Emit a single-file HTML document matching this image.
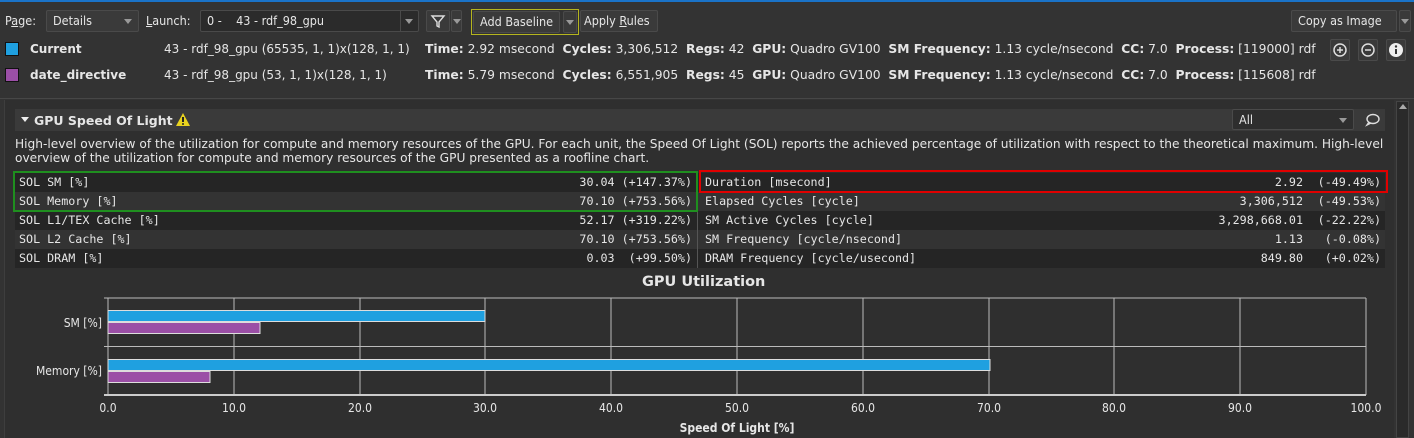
<!DOCTYPE html>
<html><head><meta charset="utf-8"><style>
*{box-sizing:border-box;margin:0;padding:0}
body{width:1414px;height:438px;overflow:hidden;background:#333;font-family:"DejaVu Sans","Liberation Sans",sans-serif;font-size:12px;color:#e6e6e6;position:relative}
.a{position:absolute;white-space:nowrap}
.btn{position:absolute;height:22px;border:1px solid #4a4a4a;background:#3a3a3a;border-radius:2px;line-height:20px;padding:0 6px;font-size:12.5px;font-family:"DejaVu Sans Condensed","DejaVu Sans",sans-serif;white-space:nowrap;overflow:hidden}
.c{font-family:"DejaVu Sans Condensed","DejaVu Sans",sans-serif;font-size:12.5px}
.n{font-family:"DejaVu Sans",sans-serif;font-size:12px}
b{font-weight:bold}
.mono{font-family:"DejaVu Sans Mono","Liberation Mono",monospace;font-size:11.7px}
.row{position:absolute;height:19px;line-height:19px}
.caret{display:inline-block;width:0;height:0;border-left:4px solid transparent;border-right:4px solid transparent;border-top:5px solid #999}
</style></head><body>
<div class="a" style="left:0;top:0;width:1414px;height:2px;background:#1a73c8"></div>
<div class="a c" style="top:13px;left:5px">P<u>a</u>ge:</div>
<div class="btn" style="left:46px;top:10px;width:93px">Details<span class="caret" style="position:absolute;right:6px;top:8px"></span></div>
<div class="a c" style="left:146px;top:13px"><u>L</u>aunch:</div>
<div class="btn" style="left:200px;top:10px;width:219px;background:#2b2b2b">0 -&nbsp;&nbsp;&nbsp;&nbsp;43 - rdf_98_gpu<span style="position:absolute;right:0;top:0;width:18px;height:20px;border-left:1px solid #4a4a4a"></span><span class="caret" style="position:absolute;right:5px;top:8px"></span></div>
<div class="btn" style="left:426px;top:10px;width:24px;padding:0"><svg width="22" height="20" viewBox="0 0 22 20"><path d="M5 5h12l-5 6v5l-2-1v-4z" fill="none" stroke="#ddd" stroke-width="1.4"/></svg></div>
<div class="btn" style="left:451px;top:10px;width:11px;padding:0"><span class="caret" style="position:absolute;left:1px;top:8px"></span></div>
<div class="a" style="left:471px;top:9px;width:108px;height:26px;border:1px solid #b5b51e"></div>
<div class="btn" style="left:473px;top:11px;width:87px;height:22px">Add Baseline</div>
<div class="btn" style="left:563px;top:11px;width:14px;padding:0"><span class="caret" style="position:absolute;left:2px;top:8px"></span></div>
<div class="btn" style="left:580px;top:10px;width:78px;padding:0 3px">Apply <u>R</u>ules</div>
<div class="btn" style="left:1291px;top:10px;width:106px">Copy as Image</div>
<div class="btn" style="left:1399px;top:10px;width:12px;padding:0"><span class="caret" style="position:absolute;left:1px;top:8px"></span></div>

<div class="a" style="left:5px;top:42px;width:14px;height:14px;background:#1fa0e0;border:1px solid #111"></div>
<div class="a" style="left:5px;top:68px;width:14px;height:14px;background:#9b4fa6;border:1px solid #111"></div>
<div class="a n" style="left:30px;top:42px"><b>Current</b></div>
<div class="a n" style="left:30px;top:68px"><b>date_directive</b></div>
<div class="a n" style="left:164px;top:42px">43 - rdf_98_gpu (65535, 1, 1)x(128, 1, 1)</div>
<div class="a n" style="left:164px;top:68px">43 - rdf_98_gpu (53, 1, 1)x(128, 1, 1)</div>
<div class="a n" style="left:425px;top:42px;font-size:12.3px"><b>Time:</b> 2.92 msecond&nbsp;&nbsp;<b>Cycles:</b> 3,306,512&nbsp;&nbsp;<b>Regs:</b> 42&nbsp;&nbsp;<b>GPU:</b> Quadro GV100&nbsp;&nbsp;<b>SM Frequency:</b> 1.13 cycle/nsecond&nbsp;&nbsp;<b>CC:</b> 7.0&nbsp;&nbsp;<b>Process:</b> [119000] rdf</div>
<div class="a n" style="left:425px;top:68px;font-size:12.3px"><b>Time:</b> 5.79 msecond&nbsp;&nbsp;<b>Cycles:</b> 6,551,905&nbsp;&nbsp;<b>Regs:</b> 45&nbsp;&nbsp;<b>GPU:</b> Quadro GV100&nbsp;&nbsp;<b>SM Frequency:</b> 1.13 cycle/nsecond&nbsp;&nbsp;<b>CC:</b> 7.0&nbsp;&nbsp;<b>Process:</b> [115608] rdf</div>
<div class="btn" style="left:1330px;top:39px;width:20px;padding:0;text-align:center"><svg width="18" height="20"><circle cx="9" cy="10" r="6" fill="none" stroke="#ddd" stroke-width="1.5"/><path d="M6 10h6M9 7v6" stroke="#ddd" stroke-width="1.5"/></svg></div>
<div class="btn" style="left:1358px;top:39px;width:20px;padding:0"><svg width="18" height="20"><circle cx="9" cy="10" r="6" fill="none" stroke="#ddd" stroke-width="1.5"/><path d="M6 10h6" stroke="#ddd" stroke-width="1.5"/></svg></div>
<div class="btn" style="left:1386px;top:39px;width:20px;padding:0"><svg width="18" height="20"><circle cx="9" cy="10" r="7" fill="#eee"/><path d="M9 9v5" stroke="#333" stroke-width="2"/><circle cx="9" cy="6.5" r="1.2" fill="#333"/></svg></div>

<div class="a" style="left:0;top:98px;width:1414px;height:1px;background:#474747"></div>
<div class="a" style="left:4px;top:100px;width:1390px;height:338px;background:#2f2f2f;border-left:1px solid #3e3e3e"></div>
<div class="a" style="left:1396px;top:101px;width:13px;height:337px;background:#2a2a2a;border:1px solid #444"></div>
<div class="a" style="left:1399px;top:104px;width:0;height:0;border-left:4px solid transparent;border-right:4px solid transparent;border-bottom:5px solid #aaa"></div>

<div class="a" style="left:15px;top:109px;width:1370px;height:22px;background:#3a3a3a"></div>
<div class="a" style="left:21px;top:117px;border-left:4px solid transparent;border-right:4px solid transparent;border-top:5px solid #eee"></div>
<div class="a" style="left:34px;top:113px;font-weight:bold;font-size:12.5px">GPU Speed Of Light</div>
<svg class="a" style="left:175px;top:112px" width="16" height="15"><path d="M8 1L15 14H1z" fill="#e8d21e"/><path d="M8 5v5" stroke="#222" stroke-width="2"/><circle cx="8" cy="12" r="1" fill="#222"/></svg>
<div class="btn" style="left:1232px;top:109px;width:122px;background:#2e2e2e;height:21px;line-height:19px">All<span class="caret" style="position:absolute;right:6px;top:8px"></span></div>
<svg class="a" style="left:1365px;top:112px" width="16" height="15"><ellipse cx="8" cy="7" rx="6" ry="4.5" fill="none" stroke="#ddd" stroke-width="1.4"/><path d="M4 10l-2 3 4-2" fill="none" stroke="#ddd" stroke-width="1.4"/></svg>

<div class="a" style="left:15px;top:137px;line-height:14px;font-size:12.2px">High-level overview of the utilization for compute and memory resources of the GPU. For each unit, the Speed Of Light (SOL) reports the achieved percentage of utilization with respect to the theoretical maximum. High-level<br>overview of the utilization for compute and memory resources of the GPU presented as a roofline chart.</div>

<div class="a mono" style="left:15px;top:173px;width:1370px;height:95px">
<div class="row" style="left:0;top:0;width:1370px;background:#252525"></div>
<div class="row" style="left:0;top:38px;width:1370px;background:#252525"></div>
<div class="row" style="left:0;top:76px;width:1370px;background:#252525"></div>
<div class="row" style="left:0;top:19px;width:1370px;background:#333"></div>
<div class="row" style="left:0;top:57px;width:1370px;background:#333"></div>
<div class="a" style="left:682px;top:0;width:1px;height:95px;background:#555"></div>
<div class="row" style="left:4px;top:0">SOL SM [%]</div>
<div class="row" style="left:4px;top:19px">SOL Memory [%]</div>
<div class="row" style="left:4px;top:38px">SOL L1/TEX Cache [%]</div>
<div class="row" style="left:4px;top:57px">SOL L2 Cache [%]</div>
<div class="row" style="left:4px;top:76px">SOL DRAM [%]</div>
<div class="row" style="right:693px;top:0">30.04 (+147.37%)</div>
<div class="row" style="right:693px;top:19px">70.10 (+753.56%)</div>
<div class="row" style="right:693px;top:38px">52.17 (+319.22%)</div>
<div class="row" style="right:693px;top:57px">70.10 (+753.56%)</div>
<div class="row" style="right:693px;top:76px">0.03&nbsp; (+99.50%)</div>
<div class="row" style="left:690px;top:0">Duration [msecond]</div>
<div class="row" style="left:690px;top:19px">Elapsed Cycles [cycle]</div>
<div class="row" style="left:690px;top:38px">SM Active Cycles [cycle]</div>
<div class="row" style="left:690px;top:57px">SM Frequency [cycle/nsecond]</div>
<div class="row" style="left:690px;top:76px">DRAM Frequency [cycle/usecond]</div>
<div class="row" style="right:82px;top:0">2.92</div>
<div class="row" style="right:82px;top:19px">3,306,512</div>
<div class="row" style="right:82px;top:38px">3,298,668.01</div>
<div class="row" style="right:82px;top:57px">1.13</div>
<div class="row" style="right:82px;top:76px">849.80</div>
<div class="row" style="right:4px;top:0">(-49.49%)</div>
<div class="row" style="right:4px;top:19px">(-49.53%)</div>
<div class="row" style="right:4px;top:38px">(-22.22%)</div>
<div class="row" style="right:4px;top:57px">(-0.08%)</div>
<div class="row" style="right:4px;top:76px">(+0.02%)</div>
</div>
<div class="a" style="left:13px;top:171px;width:685px;height:41px;border:2px solid #1f8f1f"></div>
<div class="a" style="left:699px;top:170px;width:689px;height:23px;border:2px solid #e00000"></div>

<div class="a" style="left:642px;top:274px;font-weight:bold;font-size:14.5px">GPU Utilization</div>
<svg class="a" style="left:0;top:290px" width="1394" height="148" font-family="DejaVu Sans Condensed, DejaVu Sans, sans-serif" font-size="12" fill="#e6e6e6">
<g stroke="#bbb" stroke-width="1">
<line x1="108" y1="8" x2="1366" y2="8"/>
<line x1="108" y1="8" x2="108" y2="105"/>
<line x1="234" y1="8" x2="234" y2="105"/><line x1="360" y1="8" x2="360" y2="105"/><line x1="485" y1="8" x2="485" y2="105"/><line x1="611" y1="8" x2="611" y2="105"/><line x1="737" y1="8" x2="737" y2="105"/><line x1="863" y1="8" x2="863" y2="105"/><line x1="989" y1="8" x2="989" y2="105"/><line x1="1114" y1="8" x2="1114" y2="105"/><line x1="1240" y1="8" x2="1240" y2="105"/><line x1="1366" y1="8" x2="1366" y2="105"/>
<line x1="104" y1="56.5" x2="1366" y2="56.5"/>
<line x1="104" y1="8" x2="108" y2="8"/>
</g>
<line x1="104" y1="105" x2="1366" y2="105" stroke="#ccc" stroke-width="2"/>
<rect x="108" y="20.5" width="377" height="11" fill="#1fa0e0" stroke="#ddd"/>
<rect x="108" y="32.5" width="152" height="11" fill="#9b4fa6" stroke="#ddd"/>
<rect x="108" y="69.5" width="882" height="11" fill="#1fa0e0" stroke="#ddd"/>
<rect x="108" y="81.5" width="102" height="11" fill="#9b4fa6" stroke="#ddd"/>
<text x="102" y="37" text-anchor="end">SM [%]</text>
<text x="102" y="85" text-anchor="end">Memory [%]</text>
<g text-anchor="middle"><text x="108" y="122">0.0</text><text x="234" y="122">10.0</text><text x="360" y="122">20.0</text><text x="485" y="122">30.0</text><text x="611" y="122">40.0</text><text x="737" y="122">50.0</text><text x="863" y="122">60.0</text><text x="989" y="122">70.0</text><text x="1114" y="122">80.0</text><text x="1240" y="122">90.0</text><text x="1366" y="122">100.0</text>
<text x="737" y="142" font-weight="bold">Speed Of Light [%]</text></g>
</svg>
</body></html>
